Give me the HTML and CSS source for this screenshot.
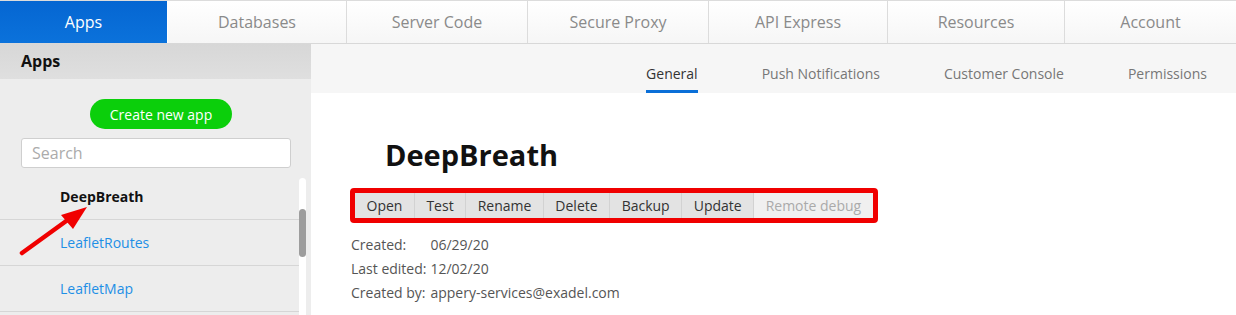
FILE: index.html
```html
<!DOCTYPE html>
<html>
<head>
<meta charset="utf-8">
<link rel="stylesheet" href="styles.css">
</head>
<body>
<nav class="topnav">
  <a class="tab active">Apps</a>
  <a class="tab">Databases</a>
  <a class="tab">Server Code</a>
  <a class="tab">Secure Proxy</a>
  <a class="tab">API Express</a>
  <a class="tab">Resources</a>
  <a class="tab">Account</a>
</nav>
<div class="main">
  <aside class="sidebar">
    <div class="side-head">Apps</div>
    <div class="side-body">
      <button class="create-btn">Create new app</button>
      <input class="search" type="text" placeholder="Search">
      <div class="list-wrap">
        <ul class="app-list">
          <li class="app selected">DeepBreath</li>
          <li class="app">LeafletRoutes</li>
          <li class="app">LeafletMap</li>
          <li class="app"></li>
        </ul>
        <div class="scroll-track"><div class="scroll-thumb"></div></div>
      </div>
    </div>
    <svg class="arrow" width="311" height="271" viewBox="0 0 311 271">
      <line x1="22" y1="209" x2="69" y2="175" stroke="#f00000" stroke-width="4.5" stroke-linecap="round"/>
      <polygon points="87,163 61,171 73,185" fill="#f00000"/>
    </svg>
  </aside>
  <section class="content">
    <div class="subtabs">
      <a class="subtab active">General</a>
      <a class="subtab">Push Notifications</a>
      <a class="subtab">Customer Console</a>
      <a class="subtab">Permissions</a>
    </div>
    <div class="detail">
      <h1 class="title">DeepBreath</h1>
      <div class="actions">
        <span class="act">Open</span>
        <span class="act">Test</span>
        <span class="act">Rename</span>
        <span class="act">Delete</span>
        <span class="act">Backup</span>
        <span class="act">Update</span>
        <span class="act disabled">Remote debug</span>
      </div>
      <dl class="info">
        <dt>Created:</dt><dd>06/29/20</dd>
        <dt>Last edited:</dt><dd>12/02/20</dd>
        <dt>Created by:</dt><dd>appery-services@exadel.com</dd>
      </dl>
    </div>
  </section>
</div>
</body>
</html>
```
FILE: styles.css
```css
* { box-sizing: border-box; }
html, body {
  margin: 0;
  padding: 0;
  height: 315px;
  overflow: hidden;
  background: #fff;
  font-family: "Open Sans", "Noto Sans", sans-serif;
}

.topnav {
  display: grid;
  grid-template-columns: 168fr 179fr 181fr 181fr 179fr 177fr 171fr;
  height: 44px;
  border-top: 1px solid #dcdcdc;
  border-bottom: 1px solid #d8d8d8;
  background: linear-gradient(#ffffff, #f6f6f6);
}
.tab {
  display: flex;
  align-items: center;
  justify-content: center;
  font-size: 16px;
  color: #8a8a8a;
  border-right: 1px solid #dcdcdc;
}
.tab:last-child { border-right: none; }
.tab.active {
  background: linear-gradient(#0566d2, #0b72db);
  color: #fff;
  border-right-color: #ffffff;
}

.main {
  display: grid;
  grid-template-columns: 311px 1fr;
  height: 271px;
}

.sidebar {
  position: relative;
  background: #ededed;
  overflow: hidden;
}
.side-head {
  height: 35px;
  line-height: 35px;
  padding-left: 21px;
  font-size: 16px;
  font-weight: 700;
  color: #111;
  background: linear-gradient(#d7d7d7, #dfdfdf);
}
.side-body {
  display: flex;
  flex-direction: column;
  padding-top: 20px;
}
.create-btn {
  align-self: flex-start;
  margin-left: 90px;
  width: 142px;
  height: 30px;
  border: none;
  border-radius: 15px;
  background: #0bcf0b;
  color: #fff;
  font-family: inherit;
  font-size: 14px;
  padding: 0;
}
.search {
  margin: 9px 0 0 21px;
  width: 270px;
  height: 30px;
  border: 1px solid #cfcfcf;
  border-radius: 3px;
  background: #fff;
  padding: 0 10px;
  font-family: inherit;
  font-size: 16px;
  color: #333;
  outline: none;
}
.search::placeholder { color: #ababab; }

.list-wrap {
  display: grid;
  grid-template-columns: 299px 7px;
  margin-top: 6px;
}
.app-list {
  list-style: none;
  margin: 0;
  padding: 0;
}
.app {
  height: 46px;
  line-height: 45px;
  padding-left: 60px;
  font-size: 14px;
  color: #1e8fe6;
  border-bottom: 1px solid #d6d6d6;
}
.app.selected {
  color: #111;
  font-weight: 700;
}
.scroll-track {
  margin-top: 4px;
  background: #fff;
  border-radius: 4px 4px 0 0;
  padding-top: 31px;
}
.scroll-thumb {
  height: 48px;
  background: #9d9d9d;
  border-radius: 4px;
}
.arrow {
  position: absolute;
  left: 0;
  top: 0;
}

.content {
  display: flex;
  flex-direction: column;
}
.subtabs {
  display: flex;
  justify-content: flex-end;
  gap: 64px;
  padding-right: 29px;
  height: 49px;
  background: #f6f6f6;
}
.subtab {
  padding-top: 20px;
  line-height: 20px;
  font-size: 14px;
  color: #777;
  border-bottom: 3px solid transparent;
}
.subtab.active {
  color: #333;
  border-bottom-color: #0a6fd8;
}

.detail {
  padding-left: 39px;
  padding-top: 43px;
}
.title {
  margin: 0 0 14px 35px;
  font-size: 29px;
  line-height: 38px;
  font-weight: 700;
  color: #111;
}
.actions {
  display: inline-flex;
  border: 5px solid #f00000;
  border-radius: 4px;
}
.act {
  height: 25px;
  line-height: 25px;
  padding: 0 11.5px;
  font-size: 14px;
  color: #333;
  background: #e3e3e3;
  border-right: 1px solid #d2d2d2;
}
.act.disabled {
  background: #f0f0f0;
  color: #aaa;
  border-right: none;
}
.info {
  display: grid;
  grid-template-columns: auto 1fr;
  column-gap: 4px;
  margin: 10px 0 0 1px;
  font-size: 14px;
  line-height: 24px;
  color: #555;
}
.info dt, .info dd { margin: 0; }
```
